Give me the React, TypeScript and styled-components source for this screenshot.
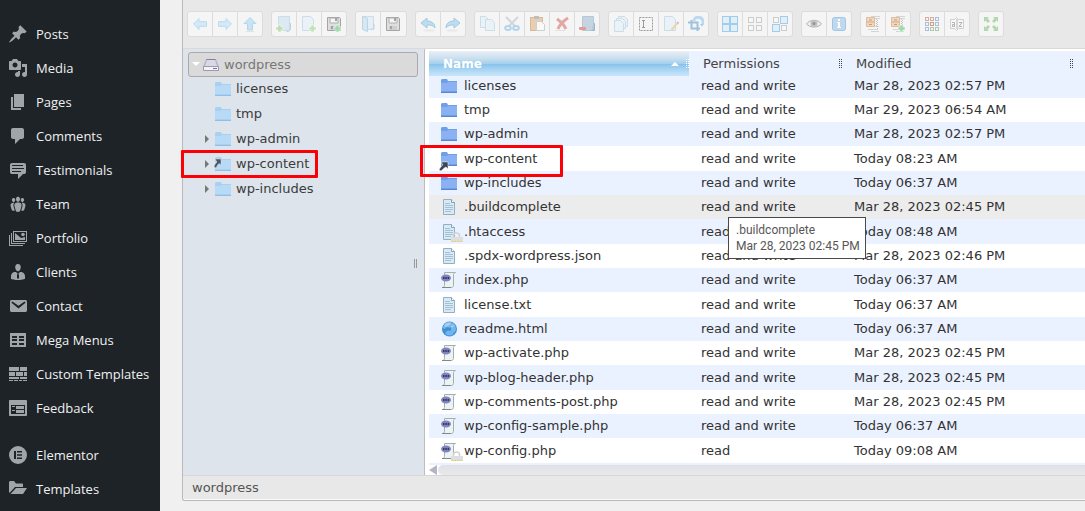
import React from 'react';
import styled, { createGlobalStyle, css } from 'styled-components';

const GlobalStyle = createGlobalStyle`
  * { box-sizing: border-box; }
  body { margin: 0; background: #f0f0f1; }
  button { font: inherit; }
`;

/* ---------- page shell ---------- */

const Shell = styled.div`
  display: flex;
  min-height: 100vh;
  overflow: hidden;
  background: #f0f0f1;
`;

const Sidebar = styled.nav`
  flex: none;
  width: 160px;
  padding-top: 17px;
  background: #1d2327;
  font-family: 'Open Sans', 'Noto Sans', sans-serif;
`;

const MenuList = styled.ul`
  list-style: none;
  margin: 0;
  padding: 0;
  & + & { margin-top: 13px; }
`;

const MenuLink = styled.a`
  display: flex;
  align-items: center;
  gap: 8px;
  height: 34px;
  padding-left: 8px;
  color: #f0f0f1;
  font-size: 13px;
  line-height: 18px;
  white-space: nowrap;
  text-decoration: none;
  svg { flex: none; fill: #a0a5aa; }
`;

const Main = styled.main`
  flex: 1;
  min-width: 0;
  padding-left: 22px;
`;

/* ---------- file manager ---------- */

const Finder = styled.section`
  border: 1px solid #b9b9b9;
  border-width: 0 0 1px 1px;
  border-bottom-left-radius: 3px;
  background: #e8e8e8;
  color: #333;
  font-family: Verdana, 'DejaVu Sans', sans-serif;
  font-size: 13px;
  line-height: 18px;
`;

const Toolbar = styled.div`
  display: flex;
  gap: 8px;
  height: 49px;
  padding: 11px 4px 0;
  border-bottom: 1px solid #dadada;
`;

const ButtonGroup = styled.div<{ $trailing?: boolean }>`
  display: flex;
  flex: none;
  height: 26px;
  padding-right: ${p => (p.$trailing ? 1 : 0)}px;
  border: 1px solid #dcdcdc;
  border-radius: 3px;
  background: #f5f5f5;
`;

const ToolButton = styled.button`
  display: flex;
  align-items: center;
  justify-content: center;
  width: 24px;
  height: 24px;
  padding: 0;
  border: 0;
  background: transparent;
  svg { opacity: 0.85; }
  & + & { width: 25px; border-left: 1px solid #dcdcdc; }
`;

const WorkZone = styled.div`
  display: flex;
  align-items: stretch;
`;

const TreePane = styled.div`
  display: flex;
  flex: none;
  width: 242px;
  padding: 3px 6px 0 5px;
  border-right: 1px solid #bdbdbd;
  background: #dde4eb;
`;

const Tree = styled.ul`
  flex: 1;
  list-style: none;
  margin: 0;
  padding: 0;
`;

const TreeItem = styled.li`
  position: relative;
  margin-bottom: 1px;
`;

const TreeLink = styled.a<{ $root?: boolean }>`
  display: flex;
  align-items: center;
  height: 24px;
  padding-left: 16px;
  color: #3b3b3b;
  text-decoration: none;
  svg { flex: none; overflow: visible; }
  ${p => p.$root && css`
    height: 25px;
    padding-left: 3px;
    margin-bottom: -1px;
    border: 1px solid #aaa;
    border-radius: 3px;
    background: #dadada;
    color: #777;
  `}
`;

const TreeArrow = styled.span`
  display: flex;
  flex: none;
  width: 11px;
`;

const TreeLabel = styled.span`
  padding-left: 5px;
`;

const Splitter = styled.div`
  align-self: center;
  flex: none;
  width: 3px;
  height: 9px;
  margin: 0 1px 0 -4px;
  border: 1px solid #999;
  border-width: 0 1px;
`;

const Highlight = styled.span<{ $width: number; $height: number; $left: number; $top: number }>`
  position: absolute;
  z-index: 2;
  left: ${p => p.$left}px;
  top: ${p => p.$top}px;
  width: ${p => p.$width}px;
  height: ${p => p.$height}px;
  border: 3px solid #fb0007;
  border-radius: 1px;
  pointer-events: none;
`;

const FilePane = styled.div`
  flex: 1;
  min-width: 0;
  padding: 2px 0 0 4px;
  background: #fff;
`;

const FileTable = styled.table`
  width: 100%;
  table-layout: fixed;
  border-collapse: separate;
  border-spacing: 0;
  border-bottom: 2px solid #ebf2ff;
`;

const HeadCell = styled.th<{ $width?: number; $sorted?: boolean; $end?: number }>`
  width: ${p => (p.$width ? `${p.$width}px` : 'auto')};
  height: 25px;
  padding: 1px ${p => p.$end || 0}px 0 14px;
  text-align: left;
  font-weight: normal;
  color: #444;
  background: #ebf2ff;
  ${p => p.$sorted && css`
    color: #fff;
    font-weight: bold;
    font-size: 12px;
    background: linear-gradient(#e9eef5 0%, #c9dff0 30%, #a5d0ee 50%, #86c1ea 51%, #a3d1f1 70%, #c9e6fa 100%);
  `}
`;

const HeadInner = styled.div`
  display: flex;
  align-items: center;
  svg { flex: none; }
`;

const HeadLabel = styled.span`
  flex: 1;
`;

const Grip = styled.span<{ $light?: boolean }>`
  width: 3px;
  height: 10px;
  color: ${p => (p.$light ? '#fff' : '#444')};
  background:
    repeating-linear-gradient(currentColor 0 1px, transparent 1px 2px) left / 1px 100% no-repeat,
    repeating-linear-gradient(currentColor 0 1px, transparent 1px 2px) right / 1px 100% no-repeat;
`;

const SortArrow = styled.span`
  width: 0;
  height: 0;
  margin-right: 7px;
  border: 4px solid transparent;
  border-top-width: 0;
  border-bottom-color: #fff;
`;

const FileRow = styled.tr<{ $hover?: boolean }>`
  height: 24px;
  &:nth-child(3n + 1) { height: 25px; }
  &:nth-child(odd) { background: #ebf2ff; }
  && { ${p => p.$hover && 'background: #ececec;'} }
  &:first-child { height: 22px; }
  &:first-child td { padding-bottom: 2px; }
`;

const Cell = styled.td`
  position: relative;
  padding: 0 0 0 12px;
  white-space: nowrap;
`;

const FileName = styled.div`
  display: flex;
  align-items: center;
  gap: 7px;
  svg { flex: none; overflow: visible; }
`;

const ScrollBar = styled.div`
  display: flex;
  height: 10px;
  svg { flex: none; }
`;

const Thumb = styled.div`
  flex: 1;
  margin-left: 1px;
  border-radius: 5px 0 0 5px;
  background: linear-gradient(#e0e0e6, #e8e8ed);
`;

const StatusBar = styled.footer`
  height: 25px;
  padding: 3px 9px;
  border-top: 1px solid #d6d6d6;
  border-bottom: 1px solid #fafafa;
  border-bottom-left-radius: 3px;
  color: #555;
`;

const Tooltip = styled.div`
  position: absolute;
  z-index: 3;
  left: 39px;
  top: 22px;
  width: 138px;
  padding: 4px 7px;
  border: 1px solid #4a4a4a;
  background: #fff;
  color: #575757;
  font-family: Roboto, 'Noto Sans', sans-serif;
  font-size: 12px;
  line-height: 16px;
`;

/* ---------- side menu icons ---------- */

const menuIcons: Record<string, React.ReactNode> = {
  Posts: <path d="M10.44 3.02l1.82-1.82 6.36 6.35-1.83 1.82c-1.05-.68-2.48-.57-3.41.36l-.75.75c-.92.93-1.04 2.35-.35 3.41l-1.83 1.82-2.41-2.41-2.8 2.79c-.42.42-3.38 2.71-3.8 2.29s1.86-3.39 2.28-3.81l2.79-2.79L4.1 9.36l1.83-1.82c1.05.69 2.48.57 3.4-.36l.75-.75c.93-.92 1.05-2.35.36-3.41z" />,
  Media: <path d="M13 11V4c0-.55-.45-1-1-1h-1.67L9 1H5L3.67 3H2c-.55 0-1 .45-1 1v7c0 .55.45 1 1 1h10c.55 0 1-.45 1-1zM7 4.5c1.38 0 2.5 1.12 2.5 2.5S8.38 9.5 7 9.5 4.5 8.38 4.5 7 5.62 4.5 7 4.5zM14 6h5v10.5c0 1.38-1.12 2.5-2.5 2.5S14 17.88 14 16.5s1.12-2.5 2.5-2.5c.17 0 .34.02.5.05V9h-3V6zm-4 8.05V13h2v3.5c0 1.38-1.12 2.5-2.5 2.5S7 17.88 7 16.5 8.12 14 9.5 14c.17 0 .34.02.5.05z" />,
  Pages: <path d="M6 15V2h10v13H6zm-1 1h8v2H3V5h2v11z" />,
  Comments: <path d="M5 2h9c1.1 0 2 .9 2 2v7c0 1.1-.9 2-2 2h-2l-5 5v-5H5c-1.1 0-2-.9-2-2V4c0-1.1.9-2 2-2z" />,
  Testimonials: <path d="M4 3h12c.55 0 1.02.2 1.41.59S18 4.45 18 5v7c0 .55-.2 1.02-.59 1.41S16.55 14 16 14h-1l-5 5v-5H4c-.55 0-1.02-.2-1.41-.59S2 12.55 2 12V5c0-.55.2-1.02.59-1.41S3.45 3 4 3zm11 2H4v1h11V5zm1 3H4v1h12V8zm-3 3H4v1h9v-1z" />,
  Team: <path d="M8.03 4.46c-.29 1.28.55 3.46 1.97 3.46 1.41 0 2.25-2.18 1.96-3.46-.22-.98-1.08-1.63-1.96-1.63-.89 0-1.74.65-1.97 1.63zm-4.13.9c-.25 1.08.47 2.93 1.67 2.93s1.92-1.85 1.67-2.93c-.19-.83-.92-1.39-1.67-1.39s-1.48.56-1.67 1.39zm8.86 0c-.25 1.08.47 2.93 1.66 2.93 1.2 0 1.92-1.85 1.67-2.93-.19-.83-.92-1.39-1.67-1.39-.74 0-1.47.56-1.66 1.39zm-.59 11.43l1.25-4.3C14.2 10 12.71 8.47 10 8.47c-2.72 0-4.21 1.53-3.44 4.02l1.26 4.3C8.05 17.51 9 18 10 18c.98 0 1.94-.49 2.17-1.21zm-6.1-7.63c-.49.67-.96 1.83-.42 3.59l1.12 3.79c-.34.2-.77.31-1.2.31-.85 0-1.65-.41-1.85-1.03l-1.07-3.65c-.65-2.11.61-3.4 2.92-3.4.27 0 .54.02.79.06-.1.1-.2.22-.29.33zm8.35-.39c2.31 0 3.58 1.29 2.92 3.4l-1.07 3.65c-.2.62-1 1.03-1.85 1.03-.43 0-.86-.11-1.2-.31l1.11-3.77c.55-1.78.08-2.94-.42-3.61-.08-.11-.18-.23-.28-.33.25-.04.51-.06.79-.06z" />,
  Portfolio: (
    <g>
      <path fillRule="evenodd" d="M5 3h14v11H5zM6 4v9h12V4z" />
      <path d="M7 5l6 5 4-1v3H7z" />
      <circle cx="15" cy="6.500" r="1.800" />
      <path d="M3 5h1v10h13v1H3zM1 7h1v10h13v1H1z" />
    </g>
  ),
  Clients: <path d="M7.3 6l-.03-.19c-.04-.37-.05-.73-.03-1.08.02-.36.1-.71.25-1.04.14-.32.31-.61.52-.86s.49-.46.83-.6c.34-.15.72-.23 1.13-.23.69 0 1.26.2 1.71.59s.76.87.91 1.44.18 1.16.09 1.78l-.03.19c-.01.09-.05.25-.11.48-.05.24-.12.47-.2.69-.08.21-.19.45-.34.72-.14.27-.3.49-.47.69-.18.19-.4.34-.67.48-.27.13-.55.19-.86.19s-.59-.06-.87-.19c-.26-.13-.49-.29-.67-.5-.18-.2-.34-.42-.49-.66-.15-.25-.26-.49-.34-.73-.09-.25-.16-.47-.21-.67-.06-.21-.1-.37-.12-.5zm9.2 6.24c.41.7.5 1.41.5 2.14v2.49c0 .03-.12.08-.29.13-.18.04-.42.13-.97.27-.55.12-1.1.24-1.65.34s-1.19.19-1.95.27c-.75.08-1.46.12-2.13.12-.68 0-1.39-.04-2.14-.12-.75-.07-1.4-.17-1.98-.27-.58-.11-1.08-.23-1.56-.34-.49-.11-.8-.21-1.06-.29L3 16.87v-2.49c0-.75.07-1.46.46-2.15s.81-1.25 1.5-1.68C5.66 10.12 7.19 10 8 10l1.67 1.67L9 13v3l1.02 1.08L11 16v-3l-.68-1.33L11.97 10c.77 0 2.2.07 2.9.52.71.45 1.21 1.02 1.63 1.72z" />,
  Contact: <path d="M3.87 4h13.25C18.37 4 19 4.59 19 5.79v8.42c0 1.19-.63 1.79-1.88 1.79H3.87c-1.25 0-1.88-.6-1.88-1.79V5.79c0-1.2.63-1.79 1.88-1.79zm6.62 8.6l6.74-5.53c.24-.2.43-.66.13-1.07-.29-.41-.82-.42-1.17-.17l-5.7 3.86L4.8 5.83c-.35-.25-.88-.24-1.17.17-.3.41-.11.87.13 1.07z" />,
  'Mega Menus': <path fillRule="evenodd" d="M2 3h16v14H2zM4 6v2h5V6zm7 0v2h5V6zM4 9v2h5V9zm7 0v2h5V9zM4 13v2h5v-2zm7 0v2h5v-2z" />,
  'Custom Templates': <path d="M1 3h10v4H1zM12 3h7v4h-7zM1 8h6v4H1zM8 8h7v4H8zM16 8h3v4h-3zM1 13h10v2H1zM12 13h7v2h-7zM1 16h4v1H1zM6 16h4v1H6zM11 16h3v1h-3zM15 16h4v1h-4z" />,
  Feedback: <path d="M2 2h16c.55 0 1 .45 1 1v14c0 .55-.45 1-1 1H2c-.55 0-1-.45-1-1V3c0-.55.45-1 1-1zm15 14V7H3v9h14zM4 8v1h3V8H4zm4 0v3h8V8H8zm-4 4v1h3v-1H4zm4 0v3h8v-3H8z" />,
  Elementor: <path fillRule="evenodd" d="M10 1a9 9 0 1 0 0 18 9 9 0 0 0 0-18zM6 6h2v8H6zM9 6h5v1.600H9zM9 9.200h5v1.600H9zM9 12.400h5V14H9z" />,
  Templates: (
    <g>
      <path d="M1 3.500C1 2.700 1.600 2 2.500 2H6l2 2.500h6c.6 0 1 .5 1 1V8H7L2 13.500H1z" />
      <path d="M8 9h11l-4 6H2.500z" />
    </g>
  ),
};

const menuGroups = [
  ['Posts', 'Media', 'Pages', 'Comments', 'Testimonials', 'Team', 'Portfolio', 'Clients', 'Contact', 'Mega Menus', 'Custom Templates', 'Feedback'],
  ['Elementor', 'Templates'],
];

/* ---------- toolbar icons, drawn on a 16px grid ---------- */

const page = (x: number, y: number, w: number, h: number) => (
  <path d={`M${x + 0.5} ${y + 0.5}h${w - 4}l3 3v${h - 4}h${1 - w}z`} fill="#e9f2f8" stroke="#c3dae8" />
);

const plus = (x: number, y: number, fill: string) => (
  <path d={`M${x + 2} ${y}h3v2h2v3h-2v2h-3v-2h-2v-3h2z`} fill={fill} stroke="#fff" strokeWidth=".5" />
);

const floppy = (
  <g>
    <path d="M1.500 1.500h12l1 1v12h-13z" fill="#dcdcdc" stroke="#969696" />
    <path d="M4 2h8v5H4z" fill="#f4f4f4" stroke="#a3a3a3" />
    <path d="M4 10h8v4H4z" fill="#c9c9c9" />
    <path d="M5 10h2v3H5zM9 2h2v3H9z" fill="#969696" />
  </g>
);

const squares = (filled: boolean[]) =>
  [[1, 1], [9, 1], [1, 9], [9, 9]].map(([x, y], i) =>
    filled[i]
      ? <rect key={i} x={x - 0.5} y={y - 0.5} width="7" height="7" fill="#deeef9" stroke="#93c6ea" />
      : <rect key={i} x={x + 0.5} y={y + 0.5} width="5" height="5" fill="#f8f8f8" stroke="#c6c6c6" />
  );

const archive = (
  <g>
    <path d="M1.500 1.500h8v9h-8z" fill="#eed3b4" stroke="#dcb48c" />
    <path d="M2 6h7" stroke="#cf9f70" />
    <path d="M4 4h3M4 8.500h3" stroke="#c08f62" />
    <path d="M6 .5h9M10 2.500h5M10 10.500h4M3 13.500h10M6 15.500h8" stroke="#cfcfcf" />
    <path d="M11.500 3v7M12.500 4v9" stroke="#bdbdbd" strokeDasharray="1 1" />
  </g>
);

const undo = (
  <g>
    <path d="M1 7l6-5v3c5 0 8 2.500 8 7-2-2.500-4-3-8-3v3z" fill="#b5d9ef" stroke="#94c3e0" strokeLinejoin="round" />
    <ellipse cx="9" cy="14.500" rx="6" ry="1" fill="#e6e6e6" />
  </g>
);

const dots = ['#cfa28f', '#cfa28f', '#9fb5d4', '#9fb5d4', '#d08b6c', '#9fb5d4', '#9fb5d4', '#9cc3a2', '#9cc3a2'];

const toolIcons: Record<string, React.ReactNode> = {
  Back: <path d="M1.500 8L7 2.500v3.200h7.500v4.600H7v3.200z" fill="#cfe9f8" stroke="#aed7ef" strokeLinejoin="round" />,
  Forward: <path d="M14.500 8L9 2.500v3.200H1.500v4.600H9v3.200z" fill="#cfe9f8" stroke="#aed7ef" strokeLinejoin="round" />,
  Up: (
    <g>
      <path d="M8 1.500l6 6h-3.500v6.500h-5V7.500H2z" fill="#c0e0f4" stroke="#a9d2ec" strokeLinejoin="round" />
      <path d="M4 15.500h8" stroke="#dedede" />
    </g>
  ),
  'New folder': (
    <g>
      <path d="M2.500.5h11v14h-11z" fill="#d9e8f2" stroke="#c3d9e6" />
      <path d="M13.500 7.500h1v6l-2 2h-2" fill="none" stroke="#b3ccdc" />
      {plus(0, 9, '#b3dca4')}
    </g>
  ),
  'New file': <g>{page(1, 0, 12, 15)}{plus(8, 9, '#b9e0ab')}</g>,
  Upload: <g>{floppy}{plus(8, 9, '#8fd6a0')}</g>,
  Open: (
    <g>
      <path d="M2.500.5h11v13h-5z" fill="#e4eff6" stroke="#c3d9e6" />
      <path d="M2.500.5l5 2v13l-5-2z" fill="#d4e6f2" stroke="#b3d0e2" />
      <path d="M13 8h1v5h-3" fill="none" stroke="#b3d0e2" />
    </g>
  ),
  Download: floppy,
  Undo: undo,
  Redo: <g transform="matrix(-1 0 0 1 16 0)">{undo}</g>,
  Copy: <g>{page(1, 0, 9, 12)}{page(6, 3, 10, 12)}</g>,
  Cut: (
    <g fill="none" strokeWidth="2">
      <path d="M2 1l9 9M14 1l-9 9" stroke="#cdd2d5" />
      <ellipse cx="4" cy="12" rx="2.800" ry="2" stroke="#a9cfea" />
      <ellipse cx="12" cy="12" rx="2.800" ry="2" stroke="#a9cfea" />
    </g>
  ),
  Paste: (
    <g>
      <rect x="1.500" y="1.500" width="12" height="13" fill="#e6c9a6" stroke="#d3af86" />
      <path d="M5 0h5v3H5z" fill="#b5b5b5" />
      <path d="M7.500 5.500h5l3 3v6h-8z" fill="#fafafa" stroke="#c9c9c9" />
    </g>
  ),
  Delete: (
    <g>
      <path d="M3 3c3 2 7 6 9 10M14 2C9 5 6 8 4 13" fill="none" stroke="#e09a95" strokeWidth="3" />
      <path d="M1 14.500h10" stroke="#dedede" />
    </g>
  ),
  Empty: (
    <g>
      <path d="M3.500.5h11v14h-11z" fill="#bccfdd" stroke="#a9c1d2" />
      <path d="M14.500 7.500h1v7h-3" fill="#a9c1d3" stroke="#8facc2" />
      <rect x="0" y="11" width="7" height="3" rx="1" fill="#e58a87" />
    </g>
  ),
  Duplicate: <g>{page(5, 0, 10, 11)}{page(3, 2, 10, 11)}{page(1, 4, 10, 12)}</g>,
  Rename: (
    <g fill="none" stroke="#8c8c8c">
      <rect x="1.500" y="1.500" width="13" height="13" strokeDasharray="2 1" />
      <path d="M4 4.500h3M4 11.500h3M5.500 4.500v7" />
    </g>
  ),
  Edit: (
    <g>
      {page(1, 0, 12, 15)}
      <path d="M14.500 7l-6 7" stroke="#e9d0a0" strokeWidth="2" />
      <path d="M15.500 6l-1 1.500" stroke="#e2a6a6" strokeWidth="2" />
    </g>
  ),
  Resize: (
    <g fill="none">
      <path d="M6 5c0-5 8-5 9 0v3" stroke="#b4d4ee" strokeWidth="3" />
      <path d="M3.500 4v8.500H12M0 6.500h9.500V15" stroke="#8fb9dd" strokeWidth="2" />
      <path d="M12 8h4l-2 2.500z" fill="#9cc4e6" />
    </g>
  ),
  'Select all': squares([true, true, true, true]),
  'Select none': squares([false, false, false, false]),
  'Invert selection': squares([false, true, true, false]),
  Preview: (
    <g>
      <path d="M.5 8C4 3 12 3 15.500 8 12 12 4 12 .5 8z" fill="#efefef" stroke="#a5a5a5" />
      <circle cx="8" cy="7.500" r="3.500" fill="#b9b9b9" />
      <circle cx="8" cy="7.500" r="1.500" fill="#858585" />
    </g>
  ),
  Info: (
    <g>
      <rect x="1.500" y="1.500" width="13" height="13" rx="2" fill="#b5d5ef" stroke="#93bde0" />
      <path d="M7 3h2v2H7zM6 6h3v5h1v1H6v-1h1V7H6z" fill="#fff" />
    </g>
  ),
  Extract: archive,
  Archive: <g>{archive}{plus(8, 9, '#8fd6a0')}</g>,
  'Change view': dots.map((c, i) => (
    <rect key={i} x={1.5 + (i % 3) * 5} y={1.5 + Math.floor(i / 3) * 5} width="3" height="3" fill="#f5f5f5" stroke={c} />
  )),
  Sort: (
    <g>
      <path d="M1.500 3.500h4l2-2 2 2h5v9h-5l-2 2-2-2h-4z" fill="#f8f8f8" stroke="#c9c9c9" />
      <path d="M3 6.500h2.500v4H3.500v-2h2M8 3v10M10 6.500h3l-3 4h3" fill="none" stroke="#a9a9a9" />
    </g>
  ),
  'Full screen': (
    <path d="M1 1h5L4.500 2.500 7 5 5 7 2.500 4.500 1 6zM15 1v5l-1.500-1.500L11 7 9 5l2.500-2.500L10 1zM1 15v-5l1.500 1.500L5 9l2 2-2.500 2.500L6 15zM15 15h-5l1.500-1.500L9 11l2-2 2.500 2.500L15 10z" fill="#a8d3a4" />
  ),
};

const toolGroups = [
  ['Back', 'Forward', 'Up'],
  ['New folder', 'New file', 'Upload'],
  ['Open', 'Download'],
  ['Undo', 'Redo'],
  ['Copy', 'Cut', 'Paste', 'Delete', 'Empty'],
  ['Duplicate', 'Rename', 'Edit', 'Resize'],
  ['Select all', 'Select none', 'Invert selection'],
  ['Preview', 'Info'],
  ['Extract', 'Archive'],
  ['Change view', 'Sort'],
  ['Full screen'],
];

/* ---------- file icons ---------- */

const Folder = ({ light, link }: { light?: boolean; link?: boolean }) => (
  <svg width="16" height="16" viewBox="0 0 16 16" aria-hidden="true">
    <path d="M0 2l1-1h5l1 2h9v11H0z" fill={light ? '#a9d0f0' : '#6f9fe8'} />
    <path d="M0 5h6l1-1h9v9H0z" fill={light ? '#b7daf7' : '#8ab2f2'} />
    <path d="M0 14h16v1H0z" fill={light ? '#92bfe2' : '#5a86cc'} />
    {link && (light ? (
      <path d="M0 3h6v6L4 7.500C2.500 9 2 10 1 12l-2-1c.5-2 1.500-3.500 3-5z" fill="#4b5563" stroke="#dde4eb" strokeWidth=".5" />
    ) : (
      <path d="M0 11h7v7l-2-2c-2 1-3 2-5 4l-2-1c1-2 2-4 4-5z" fill="#3d4654" stroke="#fff" strokeWidth=".5" />
    ))}
  </svg>
);

const Lock = () => (
  <g>
    <path d="M12.500 13v-1a3 3 0 0 1 6 0v1" fill="none" stroke="#d2d2d2" strokeWidth="1.500" />
    <rect x="10" y="13" width="12" height="5" fill="#dedede" />
    <path d="M10 17.500h12" stroke="#e9cf6a" strokeDasharray="2 1" />
  </g>
);

const FileIcon = ({ kind, locked }: { kind: string; locked?: boolean }) => {
  if (kind === 'folder') return <Folder />;
  if (kind === 'link') return <Folder link />;
  return (
    <svg width="16" height="16" viewBox="0 0 16 16" aria-hidden="true">
      {kind === 'text' && (
        <g>
          <path d="M2.500.5h8l3 3v12h-11z" fill="#d9eaf5" stroke="#8fb0c6" />
          <path d="M10.500.5v3h3" fill="#fff" stroke="#7fa3bd" />
          <path d="M4 4.500h5M4 6.500h8M4 8.500h8M4 10.500h8M4 12.500h6" stroke="#a3c0d4" />
        </g>
      )}
      {kind === 'php' && (
        <g>
          <path d="M3.500.5h11c-1 0-2 1-2 2v11c0 1-1 2-2 2h-9c1 0 2-1 2-2z" fill="#edf3f2" stroke="#a3b0ad" />
          <path d="M1 15.500h9" stroke="#7d8a87" />
          <ellipse cx="5" cy="6" rx="5" ry="3.500" fill="#7f84c1" />
          <path d="M2 6h1.500M4.300 6h1.500M6.600 6h1.500" stroke="#1d1d45" strokeWidth="1.500" />
        </g>
      )}
      {kind === 'html' && (
        <g>
          <circle cx="8.500" cy="8" r="7.500" fill="#3f8fd6" />
          <path d="M4 3c2-2 4-2 6-2l-1 3-3 1-2 3-2-1c0-2 1-3 2-4zM10 5l4-1 1 4-1 3-3 1-1-3z" fill="#74b7ec" />
          <ellipse cx="8.500" cy="12" rx="4" ry="2.500" fill="#6fb5ee" />
          <ellipse cx="8.500" cy="4" rx="5" ry="2.500" fill="#fff" opacity=".35" />
        </g>
      )}
      {locked && <Lock />}
    </svg>
  );
};

const Drive = () => (
  <svg width="16" height="16" viewBox="0 0 16 16" aria-hidden="true">
    <path d="M3 2h10l3 8v3H0v-3z" fill="#b5b3c6" />
    <path d="M4 3h8l2 6H2z" fill="#d9d8e6" />
    <path d="M.5 9.500h15v4H.5z" fill="#f4f4f8" stroke="#9a99ad" />
    <path d="M10 11.500h4" stroke="#77768c" />
    <path d="M3.500 2.500h9" stroke="#83829a" />
  </svg>
);

/* ---------- data ---------- */

const treeNodes = [
  { name: 'licenses' },
  { name: 'tmp' },
  { name: 'wp-admin', open: true },
  { name: 'wp-content', open: true, link: true },
  { name: 'wp-includes', open: true },
];

const RW = 'read and write';
const files: { name: string; kind: string; perm: string; date: string; locked?: boolean }[] = [
  { name: 'licenses', kind: 'folder', perm: RW, date: 'Mar 28, 2023 02:57 PM' },
  { name: 'tmp', kind: 'folder', perm: RW, date: 'Mar 29, 2023 06:54 AM' },
  { name: 'wp-admin', kind: 'folder', perm: RW, date: 'Mar 28, 2023 02:57 PM' },
  { name: 'wp-content', kind: 'link', perm: RW, date: 'Today 08:23 AM' },
  { name: 'wp-includes', kind: 'folder', perm: RW, date: 'Today 06:37 AM' },
  { name: '.buildcomplete', kind: 'text', perm: RW, date: 'Mar 28, 2023 02:45 PM' },
  { name: '.htaccess', kind: 'text', perm: RW, date: 'Today 08:48 AM', locked: true },
  { name: '.spdx-wordpress.json', kind: 'text', perm: RW, date: 'Mar 28, 2023 02:46 PM' },
  { name: 'index.php', kind: 'php', perm: RW, date: 'Today 06:37 AM' },
  { name: 'license.txt', kind: 'text', perm: RW, date: 'Today 06:37 AM' },
  { name: 'readme.html', kind: 'html', perm: RW, date: 'Today 06:37 AM' },
  { name: 'wp-activate.php', kind: 'php', perm: RW, date: 'Mar 28, 2023 02:45 PM' },
  { name: 'wp-blog-header.php', kind: 'php', perm: RW, date: 'Mar 28, 2023 02:45 PM' },
  { name: 'wp-comments-post.php', kind: 'php', perm: RW, date: 'Mar 28, 2023 02:45 PM' },
  { name: 'wp-config-sample.php', kind: 'php', perm: RW, date: 'Today 06:37 AM' },
  { name: 'wp-config.php', kind: 'php', perm: 'read', date: 'Today 09:08 AM', locked: true },
];

export default function App() {
  return (
    <>
      <GlobalStyle />
      <Shell>
        <Sidebar aria-label="Admin menu">
          {menuGroups.map(group => (
            <MenuList key={group[0]}>
              {group.map(name => (
                <li key={name}>
                  <MenuLink href="#">
                    <svg width="20" height="20" viewBox="0 0 20 20" aria-hidden="true">{menuIcons[name]}</svg>
                    {name}
                  </MenuLink>
                </li>
              ))}
            </MenuList>
          ))}
        </Sidebar>
        <Main>
          <Finder>
            <Toolbar role="toolbar" aria-label="File tools">
              {toolGroups.map(group => (
                <ButtonGroup key={group[0]} $trailing={group[0] === 'Open'}>
                  {group.map(name => (
                    <ToolButton key={name} type="button" aria-label={name}>
                      <svg width="16" height="16" viewBox="0 0 16 16" aria-hidden="true">{toolIcons[name]}</svg>
                    </ToolButton>
                  ))}
                </ButtonGroup>
              ))}
            </Toolbar>
            <WorkZone>
              <TreePane>
                <Tree>
                  <TreeItem>
                    <TreeLink href="#" $root>
                      <TreeArrow>
                        <svg width="8" height="5" viewBox="0 0 8 5" aria-hidden="true"><path d="M0 0h8L4 4z" fill="#fff" /></svg>
                      </TreeArrow>
                      <Drive />
                      <TreeLabel>wordpress</TreeLabel>
                    </TreeLink>
                  </TreeItem>
                  {treeNodes.map(node => (
                    <TreeItem key={node.name}>
                      <TreeLink href="#">
                        <TreeArrow>
                          {node.open && (
                            <svg width="6" height="8" viewBox="0 0 6 8" aria-hidden="true"><path d="M1 0l4 4-4 4z" fill="#777" /></svg>
                          )}
                        </TreeArrow>
                        <Folder light link={node.link} />
                        <TreeLabel>{node.name}</TreeLabel>
                      </TreeLink>
                      {node.link && <Highlight $left={-7} $top={-2} $width={137} $height={28} />}
                    </TreeItem>
                  ))}
                </Tree>
                <Splitter />
              </TreePane>
              <FilePane>
                <FileTable>
                  <thead>
                    <tr>
                      <HeadCell $width={260} $sorted>
                        <HeadInner><HeadLabel>Name</HeadLabel><SortArrow /><Grip $light /></HeadInner>
                      </HeadCell>
                      <HeadCell $width={153}>
                        <HeadInner><HeadLabel>Permissions</HeadLabel><Grip /></HeadInner>
                      </HeadCell>
                      <HeadCell $end={12}>
                        <HeadInner><HeadLabel>Modified</HeadLabel><Grip /></HeadInner>
                      </HeadCell>
                    </tr>
                  </thead>
                  <tbody>
                    {files.map(file => {
                      const hovered = file.name === '.buildcomplete';
                      return (
                        <FileRow key={file.name} $hover={hovered}>
                          <Cell>
                            <FileName><FileIcon kind={file.kind} locked={file.locked} />{file.name}</FileName>
                            {file.kind === 'link' && <Highlight $left={-9} $top={-1} $width={143} $height={32} />}
                          </Cell>
                          <Cell>
                            {file.perm}
                            {hovered && <Tooltip role="tooltip">.buildcomplete<br />Mar 28, 2023 02:45 PM</Tooltip>}
                          </Cell>
                          <Cell>{file.date}</Cell>
                        </FileRow>
                      );
                    })}
                  </tbody>
                </FileTable>
                <ScrollBar>
                  <svg width="8" height="10" viewBox="0 0 8 10" aria-hidden="true"><path d="M8 0v10L0 5z" fill="#b4b4c4" /></svg>
                  <Thumb />
                </ScrollBar>
              </FilePane>
            </WorkZone>
            <StatusBar>wordpress</StatusBar>
          </Finder>
        </Main>
      </Shell>
    </>
  );
}
